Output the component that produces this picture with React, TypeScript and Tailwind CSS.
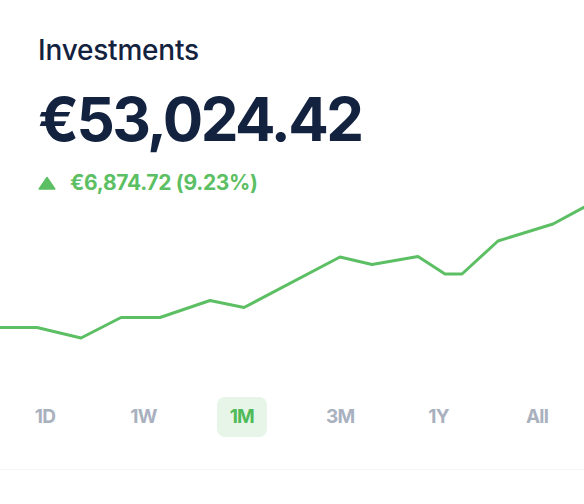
import React from 'react';

const ranges = ['1D', '1W', '1M', '3M', '1Y', 'All'];

// chart points, relative to the svg top (y=200 on the page)
const points: [number, number][] = [
  [-4, 127.5],
  [37, 127.5],
  [81, 138],
  [121, 117.5],
  [160, 117.5],
  [210, 100.5],
  [244, 107.5],
  [340, 57],
  [372, 64.5],
  [418, 56.5],
  [445, 74],
  [462, 74],
  [498, 41],
  [553, 24],
  [590, 4],
];

const App: React.FC = () => {
  const active = '1M';

  return (
    <div className="w-[584px] h-[504px] bg-white overflow-hidden" style={{ fontFamily: 'Inter, "Liberation Sans", sans-serif' }}>
      {/* Header */}
      <div className="pl-[38px] pt-[33px]">
        <div className="text-[28px] leading-[34px] font-medium text-[#13233f] tracking-[-0.2px]">Investments</div>
        <div className="mt-[22px] text-[60px] leading-[60px] font-bold text-[#13233f] tracking-[-2.6px]">€53,024.42</div>
        <div className="mt-[22px] flex items-center gap-[14px] text-[#5cbf63]">
          <svg width="18" height="14" viewBox="0 0 18 14" className="shrink-0">
            <path d="M9 1.5 L16.8 13 L1.2 13 Z" fill="currentColor" stroke="currentColor" strokeWidth="1.5" strokeLinejoin="round" />
          </svg>
          <span className="text-[21px] leading-[24px] font-bold tracking-[-0.3px]">€6,874.72 (9.23%)</span>
        </div>
      </div>

      {/* Chart */}
      <svg width="584" height="150" viewBox="0 0 584 150" className="block mt-[5px]">
        <polyline
          points={points.map(([x, y]) => `${x},${y}`).join(' ')}
          fill="none"
          stroke="#5cbf63"
          strokeWidth="3"
          strokeLinejoin="round"
          strokeLinecap="round"
        />
      </svg>

      {/* Range tabs */}
      <div className="mt-[47px] flex justify-between pl-[20px] pr-[22px]">
        {ranges.map((r) => (
          <button
            key={r}
            className={
              r === active
                ? 'w-[50px] h-10 rounded-lg bg-[#e6f5e7] text-[#4fba58] text-[19px] font-bold tracking-[-0.8px]'
                : 'w-[50px] h-10 rounded-lg text-[#a9b1bf] text-[19px] font-bold tracking-[-0.8px]'
            }
          >
            {r}
          </button>
        ))}
      </div>

      {/* Divider */}
      <div className="mt-[32px] h-px bg-[#f3f4f8]" />
    </div>
  );
};

export default App;
